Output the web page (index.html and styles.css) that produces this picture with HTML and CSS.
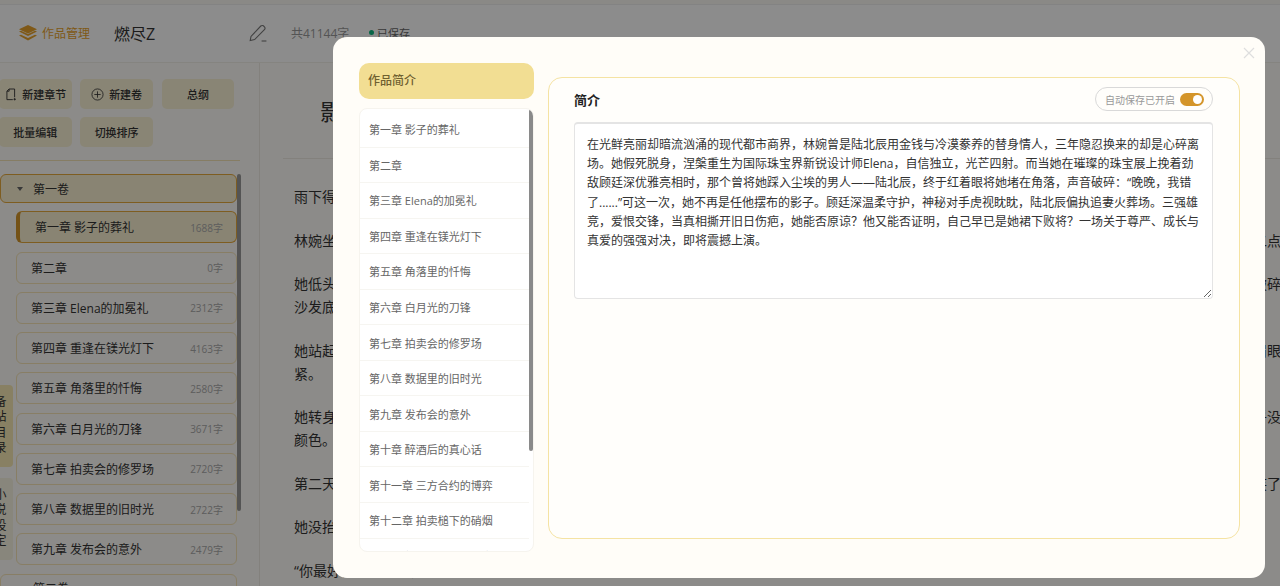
FILE: index.html
```html
<!DOCTYPE html>
<html lang="zh-CN">
<head>
    <meta charset="UTF-8">
    <title>作品管理</title>
    <link rel="stylesheet" href="styles.css">
</head>
<body>
    <div class="page">
        <header class="topbar">
            <div class="brand">
                <svg class="brand-icon" viewBox="0 0 20 16" width="20" height="16">
                    <path d="M10 0 L19 4.2 L10 8.4 L1 4.2 Z" fill="currentColor"/>
                    <path d="M1 6.6 L3 5.7 L10 9 L17 5.7 L19 6.6 L10 11 Z" fill="currentColor"/>
                    <path d="M1 10.6 L3 9.7 L10 13 L17 9.7 L19 10.6 L10 15.6 Z" fill="currentColor"/>
                </svg>
                <span>作品管理</span>
            </div>
            <div class="book-name">燃尽Z</div>
            <svg class="pencil" viewBox="0 0 18 18" width="18" height="18" fill="none" stroke="currentColor" stroke-width="1.1">
                <path d="M1.2 16.6 L2 12.4 L11.8 2 Q13 1 14.4 1.8 L15.6 3 Q16.6 4.4 15.4 5.6 L5.6 15.6 Z"/>
                <path d="M12.6 17 H17.4"/>
            </svg>
            <span class="word-total">共41144字</span>
            <span class="saved"><i class="dot"></i>已保存</span>
        </header>

        <div class="workspace">
            <aside class="sidebar">
                <div class="actions">
                    <button class="act">
                        <svg viewBox="0 0 12 14" width="11" height="13" fill="none" stroke="currentColor" stroke-width="1">
                            <path d="M3.4 1 H9.4 V10 M3.4 1 L1 3.4 V12.6 H7.4"/>
                            <path d="M3.4 1 V3.4 H1"/>
                            <path d="M9.4 11 V13.4 M8.2 12.2 H10.8"/>
                        </svg>新建章节
                    </button>
                    <button class="act">
                        <svg viewBox="0 0 14 14" width="13" height="13" fill="none" stroke="currentColor" stroke-width="0.9">
                            <circle cx="7" cy="7" r="6"/>
                            <path d="M7 3.6 V10.4 M3.6 7 H10.4"/>
                        </svg>新建卷
                    </button>
                    <button class="act">总纲</button>
                    <button class="act">批量编辑</button>
                    <button class="act">切换排序</button>
                </div>
                <div class="tree">
                    <i class="thumb"></i>
                    <div class="volume"><i class="caret"></i>第一卷</div>
                    <div class="chapter active"><span>第一章 影子的葬礼</span><em>1688字</em></div>
                    <div class="chapter"><span>第二章</span><em>0字</em></div>
                    <div class="chapter"><span>第三章 Elena的加冕礼</span><em>2312字</em></div>
                    <div class="chapter"><span>第四章 重逢在镁光灯下</span><em>4163字</em></div>
                    <div class="chapter"><span>第五章 角落里的忏悔</span><em>2580字</em></div>
                    <div class="chapter"><span>第六章 白月光的刀锋</span><em>3671字</em></div>
                    <div class="chapter"><span>第七章 拍卖会的修罗场</span><em>2720字</em></div>
                    <div class="chapter"><span>第八章 数据里的旧时光</span><em>2722字</em></div>
                    <div class="chapter"><span>第九章 发布会的意外</span><em>2479字</em></div>
                    <div class="volume plain"><i class="caret"></i>第二卷</div>
                </div>
            </aside>

            <main class="editor">
                <h1 class="chapter-title">影子的葬礼</h1>
                <article class="story">
                    <p>雨下得很大，敲打在落地窗上，像是无数细小的指尖在抓挠。城市的霓虹被水汽晕开，模糊成一片冰冷的光。</p>
                    <p class="fill">林婉坐在沙发的一角，手里捧着一杯早已凉透的白水，指尖因为用力而微微泛白。今晚是她二十六岁的生日，墙上时钟指针一格一格挪动，已经快要走到十二点</p>
                    <p>她低头看着手机屏幕，那条未读的消息像一根细针扎进眼里。他说今晚有应酬不回来了，语气依旧一如既往的平淡，却让她心底那点可怜的期待在瞬间彻底破碎沙发底下那只旧纸箱里，还放着她替他准备了一整晚的礼物。</p>
                    <p>她站起身慢慢走到窗前，玻璃上清晰映出一张苍白而又陌生的脸，那眉眼和照片里的女人有足足七分相似，这是她留在他身边唯一的理由。她下意识让自己眉眼紧。</p>
                    <p>她转身回到餐桌旁，烛火已经快要燃到了尽头，蛋糕上的奶油已塌下去一小块。她又拿起那条他去年送的长裙，布料冰凉得像水，在昏黄的灯光下看起来几乎没颜色。</p>
                    <p class="fill">第二天清晨，雨停了，她把自己收拾得干干净净，像往常的每一天一样去公司打卡，同事们没有人发现她的眼睛是肿的，只有他的女秘书多看了她一眼，冷笑了</p>
                    <p>她没抬头，只是把文件一页一页整理好，放到他的办公桌上。</p>
                    <p>“你最好记住自己的身份。”</p>
                </article>
            </main>
        </div>

        <div class="side-tab first">备站目录</div>
        <div class="side-tab second">小说设定</div>
    </div>

    <!-- 作品简介弹窗 -->
    <div class="overlay">
        <section class="modal">
            <span class="close">
                <svg viewBox="0 0 12 12" width="12" height="12" fill="none" stroke="currentColor" stroke-width="1.2">
                    <path d="M1 1 L11 11 M11 1 L1 11"/>
                </svg>
            </span>
            <nav class="modal-nav">
                <div class="nav-head">作品简介</div>
                <div class="nav-list">
                    <i class="thumb"></i>
                    <div class="nav-item">第一章 影子的葬礼</div>
                    <div class="nav-item">第二章</div>
                    <div class="nav-item">第三章 Elena的加冕礼</div>
                    <div class="nav-item">第四章 重逢在镁光灯下</div>
                    <div class="nav-item">第五章 角落里的忏悔</div>
                    <div class="nav-item">第六章 白月光的刀锋</div>
                    <div class="nav-item">第七章 拍卖会的修罗场</div>
                    <div class="nav-item">第八章 数据里的旧时光</div>
                    <div class="nav-item">第九章 发布会的意外</div>
                    <div class="nav-item">第十章 醉酒后的真心话</div>
                    <div class="nav-item">第十一章 三方合约的博弈</div>
                    <div class="nav-item">第十二章 拍卖槌下的硝烟</div>
                    <div class="nav-item">第十三章 三角迷局的秘密</div>
                </div>
            </nav>
            <div class="panel">
                <div class="panel-head">
                    <h2>简介</h2>
                    <div class="autosave">
                        <span>自动保存已开启</span>
                        <i class="switch"></i>
                    </div>
                </div>
                <textarea class="summary" spellcheck="false">在光鲜亮丽却暗流汹涌的现代都市商界，林婉曾是陆北辰用金钱与冷漠豢养的替身情人，三年隐忍换来的却是心碎离场。她假死脱身，涅槃重生为国际珠宝界新锐设计师Elena，自信独立，光芒四射。而当她在璀璨的珠宝展上挽着劲敌顾廷深优雅亮相时，那个曾将她踩入尘埃的男人——陆北辰，终于红着眼将她堵在角落，声音破碎：“晚晚，我错了......”可这一次，她不再是任他摆布的影子。顾廷深温柔守护，神秘对手虎视眈眈，陆北辰偏执追妻火葬场。三强雄竞，爱恨交锋，当真相撕开旧日伤疤，她能否原谅？他又能否证明，自己早已是她裙下败将？一场关于尊严、成长与真爱的强强对决，即将震撼上演。</textarea>
            </div>
        </section>
    </div>
</body>
</html>
```

FILE: styles.css
```css
* {
    box-sizing: border-box;
}

body {
    margin: 0;
    height: 100vh;
    overflow: hidden;
    font-family: "Open Sans", "Noto Sans CJK SC", sans-serif;
    color: #333;
    background: #fffdf9;
}

.page {
    height: 100%;
    display: flex;
    flex-direction: column;
    border-top: 4px solid #fbf9f5;
}

/* 顶部栏 */
.topbar {
    height: 59px;
    flex-shrink: 0;
    display: flex;
    align-items: center;
    padding: 0 0 2px 18px;
    border-top: 1px solid #efefef;
    border-bottom: 1px solid #f2f0ea;
    background: #fff;
}

.brand {
    display: flex;
    align-items: center;
    gap: 4px;
    width: 96px;
    font-size: 12px;
    color: #e8a32c;
}

.book-name {
    width: 135px;
    font-size: 16px;
    color: #333;
}

.pencil {
    color: #777;
    margin-right: 24px;
}

.word-total {
    width: 78px;
    font-size: 12px;
    color: #999;
}

.saved {
    display: flex;
    align-items: center;
    gap: 3px;
    font-size: 11px;
    color: #666;
}

.dot {
    width: 5px;
    height: 5px;
    border-radius: 50%;
    background: #10b981;
}

.workspace {
    flex: 1;
    min-height: 0;
    display: flex;
}

/* 左侧章节树 */
.sidebar {
    width: 260px;
    flex-shrink: 0;
    display: flex;
    flex-direction: column;
    padding-top: 16px;
    border-right: 1px solid #efece4;
    overflow: hidden;
}

.actions {
    display: grid;
    grid-template-columns: repeat(3, 72.7px);
    grid-auto-rows: 30px;
    gap: 8px 8.6px;
    width: 241px;
    padding-bottom: 13px;
    margin-left: -1px;
    border-bottom: 1px solid #f4e4b6;
}

.act {
    display: flex;
    align-items: center;
    justify-content: center;
    gap: 5px;
    padding: 0;
    border: 0;
    border-radius: 5px;
    font: 500 11px "Open Sans", "Noto Sans CJK SC", sans-serif;
    color: #333;
    background: #faf2d6;
}

.act:first-child {
    padding-left: 2px;
}

.tree {
    position: relative;
    width: 241px;
    flex: 1;
    min-height: 0;
    margin-top: 13px;
    padding-right: 4px;
    overflow: hidden;
    display: flex;
    flex-direction: column;
    align-items: flex-end;
    gap: 8.25px;
}

/* 滚动条滑块 */
.thumb {
    position: absolute;
    top: 0;
    right: 0;
    width: 4px;
    border-radius: 2px;
    background: #9a9a9a;
}

.tree .thumb {
    height: 337px;
}

.nav-list .thumb {
    height: 342px;
    background: #8a8a8a;
}

.volume {
    width: 237px;
    height: 29px;
    flex-shrink: 0;
    display: flex;
    align-items: center;
    padding-left: 16px;
    font-size: 12px;
    border: 1px solid #e6a93c;
    border-radius: 6px;
    background: #f9f1d2;
}

.volume.plain {
    background: none;
    border-color: #f7e6b8;
}

.caret {
    width: 0;
    height: 0;
    margin-right: 10px;
    border: 3px solid transparent;
    border-top: 4px solid #666;
    border-bottom: 0;
}

.chapter {
    width: 221px;
    height: 32px;
    flex-shrink: 0;
    display: flex;
    align-items: center;
    justify-content: space-between;
    padding: 0 13px 0 14px;
    font-size: 12px;
    border: 1px solid #f7e6b8;
    border-radius: 6px;
}

.chapter em {
    font-style: normal;
    font-size: 10px;
    color: #aaa;
}

.chapter.active {
    padding-left: 15px;
    border-color: #e6a93c;
    border-left: 4px solid #d4952a;
    background: #f9f1d2;
}

/* 贴边的两个标签 */
.side-tab {
    position: absolute;
    left: -14px;
    width: 27px;
    height: 82px;
    display: flex;
    align-items: center;
    justify-content: center;
    writing-mode: vertical-rl;
    letter-spacing: 3.5px;
    font-size: 12px;
    border-radius: 0 4px 4px 0;
}

.side-tab.first {
    top: 385px;
    background: #f7e9b4;
}

.side-tab.second {
    top: 478px;
    background: #f8f4e2;
}

/* 正文 */
.editor {
    flex: 1;
    min-width: 0;
    padding: 33px 0 0 23px;
    overflow: hidden;
}

.chapter-title {
    margin: 0;
    padding: 0 0 32px 37px;
    font-size: 22px;
    font-weight: 400;
    line-height: 30px;
    border-bottom: 1px solid #efece4;
}

.story {
    width: 987px;
    margin-left: 11px;
    padding-top: 26px;
    font-size: 14px;
    line-height: 23px;
    text-align: justify;
}

.story p {
    margin: 0 0 20.5px;
}

.story .fill {
    text-align-last: justify;
}

/* 弹窗 */
.overlay {
    position: fixed;
    top: 0;
    right: 0;
    bottom: 0;
    left: 0;
    padding: 37px 15px 8px 333px;
    background: rgba(0, 0, 0, 0.45);
}

.modal {
    position: relative;
    height: 100%;
    display: flex;
    gap: 14px;
    padding: 26px 25px 26px 26px;
    border-radius: 14px;
    background: #fffdf8;
}

.close {
    position: absolute;
    top: 10px;
    right: 10px;
    display: flex;
    color: #dedede;
}

.modal-nav {
    width: 175px;
    flex-shrink: 0;
    display: flex;
    flex-direction: column;
    gap: 9px;
}

.nav-head {
    height: 36px;
    flex-shrink: 0;
    display: flex;
    align-items: center;
    padding: 0 0 2px 9px;
    font-size: 12px;
    font-weight: 500;
    color: #6f6030;
    border-radius: 10px;
    background: #f2de93;
}

.nav-list {
    position: relative;
    flex: 1;
    min-height: 0;
    padding: 3px 4px 0 0;
    overflow: hidden;
    border: 1px solid #f6f4ee;
    border-radius: 8px;
    background: #fff;
}

.nav-item {
    height: 35.55px;
    display: flex;
    align-items: center;
    padding-left: 9px;
    font-size: 11px;
    color: #666;
    border-bottom: 1px solid #f6f5f1;
}

.panel {
    flex: 1;
    min-width: 0;
    margin: 14px 0 13px;
    padding: 9px 26px 0 25px;
    border: 1px solid #f5e3a3;
    border-radius: 14px;
    background: #fffefb;
}

.panel-head {
    height: 24px;
    display: flex;
    align-items: center;
    justify-content: space-between;
    margin-bottom: 11px;
}

.panel-head h2 {
    margin: 0;
    font-size: 13px;
    font-weight: 700;
    color: #222;
}

.autosave {
    height: 24px;
    display: flex;
    align-items: center;
    gap: 5px;
    padding: 0 8px 0 9px;
    font-size: 10px;
    color: #999;
    border: 1px solid #d9d9d9;
    border-radius: 12px;
}

.switch {
    position: relative;
    width: 24px;
    height: 13px;
    border-radius: 7px;
    background: #d4952a;
}

.switch::after {
    content: "";
    position: absolute;
    top: 2px;
    right: 2px;
    width: 9px;
    height: 9px;
    border-radius: 50%;
    background: #fff;
}

.summary {
    display: block;
    width: 100%;
    height: 177px;
    padding: 11px 12px;
    font: 12px/19.2px "Open Sans", "Noto Sans CJK SC", sans-serif;
    color: #333;
    border: 1px solid #e4e4e4;
    border-top-width: 2px;
    border-radius: 4px;
    outline: none;
    resize: vertical;
    background: #fff;
}
```
